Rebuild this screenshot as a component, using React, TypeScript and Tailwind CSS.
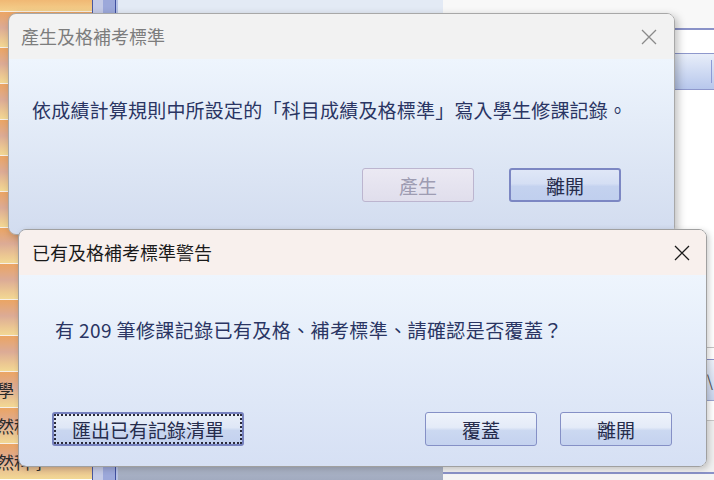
import React from 'react'

const CJK = "font-['Noto_Sans_CJK_TC','Noto_Sans',sans-serif]"

// rows of the grid behind the dialogs (left column)
const ROWS = ['', '', '', '', '', '', '', '', '', '', '數學', '自然科', '自然科學']

const CloseIcon: React.FC<{ color: string }> = ({ color }) => (
  <svg width="16" height="16" viewBox="0 0 16 16" className="shrink-0">
    <path d="M1 1 L15 15 M15 1 L1 15" stroke={color} strokeWidth="1.3" fill="none" />
  </svg>
)

type Variant = 'normal' | 'default' | 'disabled' | 'focus'

const WinButton: React.FC<{ children: React.ReactNode; variant?: Variant; w?: string }> = ({ children, variant = 'normal', w = 'w-[112px]' }) => {
  const base = `${w} h-[34px] rounded-[3px] flex items-center justify-center text-[19px] leading-none`
  if (variant === 'disabled')
    return (
      <div className={`${base} border border-[#bcb5cf] bg-[linear-gradient(to_bottom,#ebe9f3,#e0deec)] text-[#9e9cb2]`}>
        {children}
      </div>
    )
  if (variant === 'default')
    return (
      <div className={`${base} border-2 border-[#7c87c3] bg-[linear-gradient(to_bottom,#dfe7f7_0%,#d5dff4_45%,#c4d2ef_55%,#c0cfee_100%)] text-[#262c4c]`}>
        {children}
      </div>
    )
  if (variant === 'focus')
    return (
      <div className={`${base} border-2 border-[#7681be] outline-2 outline-dotted outline-[#2a2a3a] -outline-offset-4 bg-[linear-gradient(to_bottom,#e9eff9_0%,#dfe7f6_45%,#c9d6f0_55%,#c3d1ef_100%)] text-[#262c4c]`}>
        {children}
      </div>
    )
  return (
    <div className={`${base} border border-[#8590c6] bg-[linear-gradient(to_bottom,#eef3fb_0%,#e4ebf8_45%,#cbd8f1_55%,#c4d2ef_100%)] text-[#262c4c]`}>
      {children}
    </div>
  )
}

export default function App() {
  return (
    <div className={`relative w-[714px] h-[480px] overflow-hidden flex bg-white ${CJK}`}>
      {/* ── background window: left grid column ── */}
      <div className="w-[92px] flex flex-col shrink-0">
        <div className="h-[11px] bg-gradient-to-b from-[#f0b874] to-[#f4d08c]" />
        {ROWS.map((t, i) => (
          <div key={i}
            className="h-[36px] shrink-0 border-t border-[#f7efe6] bg-[linear-gradient(to_bottom,#eba563_0%,#dcab96_45%,#ecc892_80%,#f2d894_100%)] flex items-center overflow-hidden">
            <span className="-ml-[20px] text-[17px] text-[#2a2a2a] whitespace-nowrap">{t}</span>
          </div>
        ))}
      </div>

      {/* scrollbar */}
      <div className="w-[26px] shrink-0 flex">
        <div className="w-px bg-[#4a58a0]" />
        <div className="w-[10px] bg-[#c4cae6]" />
        <div className="w-[12px] bg-[#9ca8da]" />
        <div className="w-px bg-[#4050a0]" />
        <div className="w-[2px] bg-[#b6c1e4]" />
      </div>

      {/* middle panel */}
      <div className="w-[325px] shrink-0 flex flex-col">
        <div className="flex-1 bg-[#e3eaf5]" />
        <div className="h-[20px] bg-gradient-to-b from-[#b2bacb] to-[#a2abc0]" />
      </div>

      {/* right panel */}
      <div className="flex-1 flex flex-col bg-[#f8f8f8]">
        <div className="h-[28px]" />
        <div className="h-[2px] bg-[#8a92c8]" />
        <div className="h-[23px] bg-white" />
        <div className="h-[37px] border-y border-[#8e98cc] bg-gradient-to-b from-[#e8eef9] to-[#b7c7ec] flex justify-end pr-[2px] py-[6px]">
          <div className="w-px bg-[#8e9ad6]" />
        </div>
        <div className="h-[257px] bg-white" />
        <div className="h-px bg-[#c4c4c4]" />
        <div className="h-[11px] bg-white" />
        <div className="h-px bg-[#8890c8]" />
        <div className="h-[40px] bg-gradient-to-b from-[#eef2fa] to-[#c9d5ee] flex items-center justify-end pr-[1px] text-[16px] text-[#555]">\</div>
        <div className="h-px bg-[#9aa4d0]" />
        <div className="h-[19px] bg-white" />
        <div className="h-px bg-[#c8c8c8]" />
        <div className="h-[51px] bg-[#f0f0f0]" />
        <div className="h-[2px] bg-[#8a92c8]" />
        <div className="flex-1 bg-[#f4f4f4]" />
      </div>

      {/* ── dialog 1: 產生及格補考標準 ── */}
      <div className="absolute left-[8px] top-[13px] w-[667px] h-[222px] rounded-[8px] border border-[#a8a8a8] shadow-[3px_3px_8px_rgba(0,0,0,0.25)] overflow-hidden flex flex-col">
        <div className="h-[45px] shrink-0 bg-[#f2f2f2] flex items-center justify-between pl-[12px] pr-[17px]">
          <span className="text-[18px] text-[#7d7d7d]">產生及格補考標準</span>
          <CloseIcon color="#8a8a8a" />
        </div>
        <div className="flex-1 bg-gradient-to-b from-[#eef5fd] to-[#d2dcef] flex flex-col pl-[23px] pt-[37px]">
          <div className="text-[19px] leading-[28px] text-[#2a3563] tracking-[0.2px]">
            依成績計算規則中所設定的「科目成績及格標準」寫入學生修課記錄。
          </div>
          <div className="flex justify-end gap-[35px] pr-[53px] mt-[44px]">
            <WinButton variant="disabled">產生</WinButton>
            <WinButton variant="default">離開</WinButton>
          </div>
        </div>
      </div>

      {/* ── dialog 2: 已有及格補考標準警告 ── */}
      <div className="absolute left-[18px] top-[229px] w-[689px] h-[238px] rounded-[8px] border border-[#a0a0a0] shadow-[2px_2px_6px_rgba(0,0,0,0.2)] overflow-hidden flex flex-col">
        <div className="h-[45px] shrink-0 bg-[#f8f0ed] flex items-center justify-between pl-[13px] pr-[16px]">
          <span className="text-[18px] text-[#1a1a1a]">已有及格補考標準警告</span>
          <CloseIcon color="#1a1a1a" />
        </div>
        <div className="flex-1 bg-gradient-to-b from-[#eef5fd] to-[#d6e0f4] flex flex-col pl-[36px] pt-[41px]">
          <div className="text-[19px] leading-[28px] text-[#2a3563] tracking-[0.4px]">
            有 209 筆修課記錄已有及格、補考標準、請確認是否覆蓋？
          </div>
          <div className="mt-auto mb-[20px] -ml-[3px] pr-[34px] flex items-center justify-between">
            <WinButton variant="focus" w="w-[192px]">匯出已有記錄清單</WinButton>
            <div className="flex gap-[23px]">
              <WinButton>覆蓋</WinButton>
              <WinButton>離開</WinButton>
            </div>
          </div>
        </div>
      </div>
    </div>
  )
}
